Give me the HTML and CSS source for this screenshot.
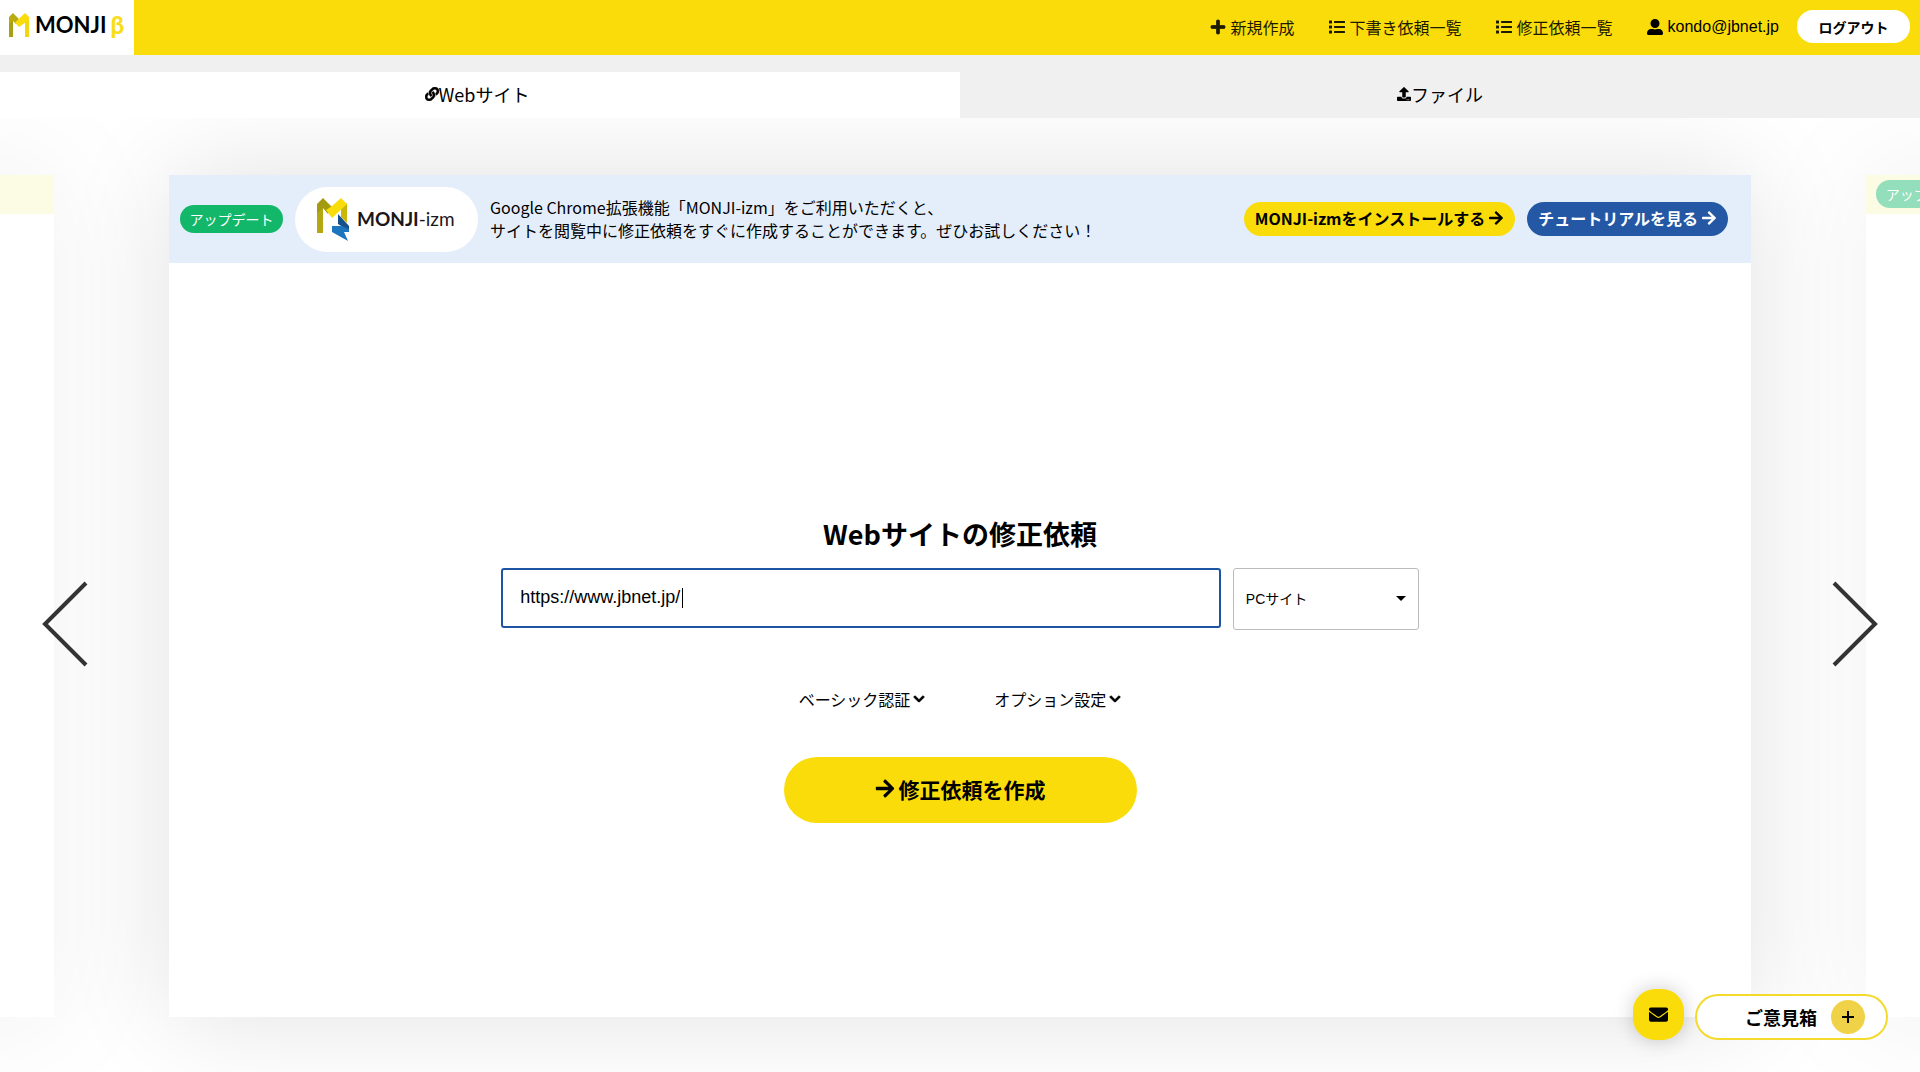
FILE: index.html
```html
<!DOCTYPE html>
<html lang="ja">
<head>
<meta charset="utf-8">
<meta name="viewport" content="width=device-width, initial-scale=1">
<title>MONJI</title>
<link rel="stylesheet" href="styles.css">
</head>
<body>
<svg class="sprite" aria-hidden="true">
  <symbol id="plus" viewBox="0 0 448 512"><path d="M416 208H272V64c0-17.67-14.33-32-32-32h-32c-17.67 0-32 14.33-32 32v144H32c-17.67 0-32 14.33-32 32v32c0 17.67 14.33 32 32 32h144v144c0 17.67 14.33 32 32 32h32c17.67 0 32-14.33 32-32V304h144c17.67 0 32-14.33 32-32v-32c0-17.67-14.33-32-32-32z" stroke="currentColor" stroke-width="24"/></symbol>
  <symbol id="list" viewBox="0 0 512 512"><path d="M80 368H16a16 16 0 0 0-16 16v64a16 16 0 0 0 16 16h64a16 16 0 0 0 16-16v-64a16 16 0 0 0-16-16zm0-320H16A16 16 0 0 0 0 64v64a16 16 0 0 0 16 16h64a16 16 0 0 0 16-16V64a16 16 0 0 0-16-16zm0 160H16a16 16 0 0 0-16 16v64a16 16 0 0 0 16 16h64a16 16 0 0 0 16-16v-64a16 16 0 0 0-16-16zm416 176H176a16 16 0 0 0-16 16v32a16 16 0 0 0 16 16h320a16 16 0 0 0 16-16v-32a16 16 0 0 0-16-16zm0-320H176a16 16 0 0 0-16 16v32a16 16 0 0 0 16 16h320a16 16 0 0 0 16-16V80a16 16 0 0 0-16-16zm0 160H176a16 16 0 0 0-16 16v32a16 16 0 0 0 16 16h320a16 16 0 0 0 16-16v-32a16 16 0 0 0-16-16z"/></symbol>
  <symbol id="user" viewBox="0 0 512 512"><path d="M256 288c79.5 0 144-64.5 144-144S335.5 0 256 0 112 64.5 112 144s64.5 144 144 144zm128 32h-55.1c-22.2 10.2-46.9 16-72.9 16s-50.6-5.8-72.9-16H128C57.3 320 0 377.3 0 448v16c0 26.5 21.5 48 48 48h416c26.5 0 48-21.5 48-48v-16c0-70.7-57.3-128-128-128z"/></symbol>
  <symbol id="link" viewBox="0 0 512 512"><path stroke="currentColor" stroke-width="20" d="M326.612 185.391c59.747 59.809 58.927 155.698.36 214.59-.11.12-.24.25-.36.37l-67.2 67.2c-59.27 59.27-155.699 59.262-214.96 0-59.27-59.26-59.27-155.7 0-214.96l37.106-37.106c9.84-9.84 26.786-3.3 27.294 10.606.648 17.722 3.826 35.527 9.69 52.721 1.986 5.822.567 12.262-3.783 16.612l-13.087 13.087c-28.026 28.026-28.905 73.66-1.155 101.96 28.024 28.579 74.086 28.749 102.325.51l67.2-67.19c28.191-28.191 28.073-73.757 0-101.83-3.701-3.694-7.429-6.564-10.341-8.569a16.037 16.037 0 0 1-6.947-12.606c-.396-10.567 3.348-21.456 11.698-29.806l21.054-21.055c5.521-5.521 14.182-6.199 20.584-1.731a152.482 152.482 0 0 1 20.522 17.197zM467.547 44.449c-59.261-59.262-155.69-59.27-214.96 0l-67.2 67.2c-.12.12-.25.25-.36.37-58.566 58.892-59.387 154.781.36 214.59a152.454 152.454 0 0 0 20.521 17.196c6.402 4.468 15.064 3.789 20.584-1.731l21.054-21.055c8.35-8.35 12.094-19.239 11.698-29.806a16.037 16.037 0 0 0-6.947-12.606c-2.912-2.005-6.64-4.875-10.341-8.569-28.073-28.073-28.191-73.639 0-101.83l67.2-67.19c28.239-28.239 74.3-28.069 102.325.51 27.75 28.3 26.872 73.934-1.155 101.96l-13.087 13.087c-4.35 4.35-5.769 10.79-3.783 16.612 5.864 17.194 9.042 34.999 9.69 52.721.509 13.906 17.454 20.446 27.294 10.606l37.106-37.106c59.271-59.259 59.271-155.699.001-214.959z"/></symbol>
  <symbol id="upload" viewBox="0 0 512 512"><path d="M296 384h-80c-13.3 0-24-10.7-24-24V192h-87.7c-17.8 0-26.7-21.5-14.1-34.1L242.3 5.7c7.5-7.5 19.8-7.5 27.3 0l152.2 152.2c12.6 12.6 3.7 34.1-14.1 34.1H320v168c0 13.3-10.7 24-24 24zm216-8v112c0 13.3-10.7 24-24 24H24c-13.3 0-24-10.7-24-24V376c0-13.3 10.7-24 24-24h136v8c0 30.9 25.1 56 56 56h80c30.9 0 56-25.1 56-56v-8h136c13.3 0 24 10.7 24 24zm-124 88c0-11-9-20-20-20s-20 9-20 20 9 20 20 20 20-9 20-20zm64 0c0-11-9-20-20-20s-20 9-20 20 9 20 20 20 20-9 20-20z"/></symbol>
  <symbol id="arrow" viewBox="0 0 448 512"><path d="M190.5 66.9l22.2-22.2c9.4-9.4 24.6-9.4 33.9 0L441 239c9.4 9.4 9.4 24.6 0 33.9L246.6 467.3c-9.4 9.4-24.6 9.4-33.9 0l-22.2-22.2c-9.5-9.5-9.3-25 .4-34.3L311.4 296H24c-13.3 0-24-10.7-24-24v-32c0-13.3 10.7-24 24-24h287.4L190.9 101.2c-9.8-9.3-10-24.8-.4-34.3z"/></symbol>
  <symbol id="chevron" viewBox="0 0 448 512"><path stroke="currentColor" stroke-width="40" d="M207.029 381.476L12.686 187.132c-9.373-9.373-9.373-24.569 0-33.941l22.667-22.667c9.357-9.357 24.522-9.375 33.901-.04L224 284.505l154.745-154.021c9.379-9.335 24.544-9.317 33.901.04l22.667 22.667c9.373 9.373 9.373 24.569 0 33.941L240.971 381.476c-9.373 9.372-24.569 9.372-33.942 0z"/></symbol>
  <symbol id="mail" viewBox="0 0 512 512"><path d="M502.3 190.8c3.9-3.1 9.7-.2 9.7 4.7V400c0 26.5-21.5 48-48 48H48c-26.5 0-48-21.5-48-48V195.6c0-5 5.7-7.8 9.7-4.7 22.4 17.4 52.1 39.5 154.1 113.6 21.1 15.4 56.7 47.8 92.2 47.6 35.7.3 72-32.8 92.3-47.6 102-74.1 131.6-96.3 154-113.7zM256 320c23.2.4 56.6-29.2 73.4-41.4 132.7-96.3 142.8-104.7 173.4-128.7 5.8-4.5 9.2-11.5 9.2-18.9v-19c0-26.5-21.5-48-48-48H48c-26.5 0-48 21.5-48 48v19c0 7.4 3.4 14.3 9.2 18.9 30.6 23.9 40.7 32.4 173.4 128.7 16.8 12.2 50.2 41.8 73.4 41.4z"/></symbol>
</svg>

<header class="header">
  <a class="logo" href="#">
    <svg class="logo-mark" viewBox="0 0 20 24" aria-hidden="true">
      <path fill="#a79f14" d="M0 4h4v20H0z"/>
      <path fill="#f0d80e" d="M16 4h4v20h-4z"/>
      <path fill="#b9ab10" d="M0 4l4-4 6 6-3 5-3-3-4 3z"/>
      <path fill="#f9dc0a" d="M16 0l4 4v3L10 14 6 9.500z"/>
    </svg>
    <span class="logo-word">MONJI</span><span class="logo-beta">β</span>
  </a>
  <nav class="nav">
    <a class="nav-link" href="#"><svg class="icon"><use href="#plus"/></svg>新規作成</a>
    <a class="nav-link" href="#"><svg class="icon"><use href="#list"/></svg>下書き依頼一覧</a>
    <a class="nav-link" href="#"><svg class="icon"><use href="#list"/></svg>修正依頼一覧</a>
    <a class="nav-link account" href="#"><svg class="icon"><use href="#user"/></svg>kondo@jbnet.jp</a>
  </nav>
  <button class="logout" type="button">ログアウト</button>
</header>

<nav class="tabs">
  <a class="tab tab-active" href="#"><svg class="icon icon-tab"><use href="#link"/></svg>Webサイト</a>
  <a class="tab" href="#"><svg class="icon icon-tab"><use href="#upload"/></svg>ファイル</a>
</nav>

<main class="carousel">
  <section class="slide slide-side" aria-hidden="true">
    <div class="notice"></div>
  </section>

  <section class="slide">
    <div class="banner">
      <span class="badge">アップデート</span>
      <div class="izm">
        <svg class="izm-mark" viewBox="0 0 32 43" aria-hidden="true">
          <path fill="#b3a80f" d="M0 6h6v29H0z"/>
          <path fill="#c9b70c" d="M24 9l6-4v20l-6-6z"/>
          <path fill="#a39a10" d="M0 6l6-6 9 9-4 7-5-6-6 5z"/>
          <path fill="#fadc0a" d="M24 0l6 6-15 14-6-8 6-4z"/>
          <path fill="#14508c" d="M21 16l11 12v5l-11-7z"/>
          <path fill="#1d75bd" d="M15 28h9l8 3v3h-5l4 9-16-9z"/>
        </svg>
        <span class="izm-word">MONJI<span class="izm-tail">-izm</span></span>
      </div>
      <p class="banner-text">Google Chrome拡張機能「MONJI-izm」をご利用いただくと、<br>サイトを閲覧中に修正依頼をすぐに作成することができます。ぜひお試しください！</p>
      <div class="banner-actions">
        <a class="pill pill-yellow" href="#">MONJI-izmをインストールする<svg class="icon icon-narrow"><use href="#arrow"/></svg></a>
        <a class="pill pill-blue" href="#">チュートリアルを見る<svg class="icon icon-narrow"><use href="#arrow"/></svg></a>
      </div>
    </div>

    <form class="form">
      <h1 class="form-title">Webサイトの修正依頼</h1>
      <div class="fields">
        <div class="url">
          <input class="url-input" type="text" value="https://www.jbnet.jp/" aria-label="URL">
          <span class="caret"></span>
        </div>
        <select class="device" aria-label="デバイス">
          <option>PCサイト</option>
        </select>
      </div>
      <div class="toggles">
        <button class="toggle" type="button">ベーシック認証<svg class="icon icon-chevron"><use href="#chevron"/></svg></button>
        <button class="toggle" type="button">オプション設定<svg class="icon icon-chevron"><use href="#chevron"/></svg></button>
      </div>
      <button class="submit" type="button"><svg class="icon icon-submit"><use href="#arrow"/></svg>修正依頼を作成</button>
    </form>
  </section>

  <section class="slide slide-side" aria-hidden="true">
    <div class="notice"><span class="badge">アップデート</span></div>
  </section>

  <button class="arrow arrow-prev" type="button" aria-label="前へ"><svg class="arrow-icon" viewBox="0 0 46 88"><path d="M44 3 3 44l41 41"/></svg></button>
  <button class="arrow arrow-next" type="button" aria-label="次へ"><svg class="arrow-icon" viewBox="0 0 46 88"><path d="M2 3l41 41L2 85"/></svg></button>
</main>

<div class="floating">
  <button class="mail" type="button" aria-label="お問い合わせ"><svg class="icon icon-mail"><use href="#mail"/></svg></button>
  <button class="opinion" type="button">ご意見箱<span class="opinion-plus"><svg class="opinion-icon" viewBox="0 0 12 12"><path d="M6 0v12M0 6h12"/></svg></span></button>
</div>
</body>
</html>
```
FILE: styles.css
```css
* {
  box-sizing: border-box;
}

body {
  margin: 0;
  min-height: 100vh;
  display: flex;
  flex-direction: column;
  overflow: hidden;
  background: #fff;
  color: #000;
  font-family: "Noto Sans CJK JP", sans-serif;
  font-size: 16px;
  line-height: 24px;
}

a {
  color: inherit;
  text-decoration: none;
}

button {
  border: 0;
  padding: 0;
  background: none;
  color: inherit;
  font-family: inherit;
  cursor: pointer;
}

.sprite {
  display: none;
}

.icon {
  width: 16px;
  height: 16px;
  flex: none;
  fill: currentColor;
}

.icon-narrow {
  width: 14px;
}

/* Header */

.header {
  display: flex;
  align-items: center;
  height: 55px;
  padding: 0 10px 2px 0;
  background: #fadc0a;
}

.logo {
  display: flex;
  align-items: center;
  width: 134px;
  height: 55px;
  margin-bottom: -2px;
  padding: 0 0 6px 9px;
  background: #fff;
  font-family: Lato, sans-serif;
  font-weight: 700;
}

.logo-mark {
  width: 20px;
  height: 24px;
}

.logo-word {
  margin-left: 6px;
  font-size: 22px;
}

.logo-beta {
  margin-left: 4px;
  color: #f9dc1c;
  font-size: 24px;
  font-weight: 900;
}

.nav {
  display: flex;
  gap: 34px;
  margin-left: auto;
  color: #1c1a00;
}

.nav-link {
  display: flex;
  align-items: center;
  gap: 5px;
}

.account {
  color: #000;
  font-family: "Liberation Sans", sans-serif;
}

.logout {
  width: 113px;
  height: 33px;
  margin-left: 18px;
  border-radius: 16px;
  background: #fff;
  font-size: 14px;
  font-weight: 700;
  line-height: 20px;
}

/* Tabs */

.tabs {
  display: flex;
  padding-top: 17px;
  background: #f0f0f0;
}

.tab {
  display: flex;
  width: 50%;
  align-items: center;
  justify-content: center;
  height: 46px;
  padding-bottom: 2px;
  font-size: 18px;
}

.tab-active {
  padding-right: 6px;
  background: #fff;
}

.icon-tab {
  width: 14px;
  height: 14px;
}

/* Carousel */

.carousel {
  position: relative;
  display: flex;
  flex: 1;
  justify-content: center;
  gap: 6%;
  padding: 57px 0 55px;
  overflow: hidden;
}

.slide {
  display: flex;
  flex: none;
  flex-direction: column;
  width: 82.4%;
  background: #fff;
  box-shadow: 0 0 100px rgba(0, 0, 0, 0.12);
}

.slide-side {
  opacity: 0.45;
}

.notice {
  height: 39px;
  padding: 5px 10px;
  background: #faf9c6;
}

.banner {
  display: flex;
  align-items: center;
  gap: 12px;
  min-height: 88px;
  padding: 11px 23px 11px 11px;
  background: #e4eefb;
}

.badge {
  display: inline-block;
  width: 103px;
  border-radius: 14px;
  background: #12b76a;
  color: #fff;
  font-size: 14px;
  line-height: 28px;
  text-align: center;
  white-space: nowrap;
}

.izm {
  display: flex;
  align-items: center;
  width: 183px;
  height: 65px;
  padding-left: 22px;
  border-radius: 33px;
  background: #fff;
}

.izm-mark {
  width: 32px;
  height: 43px;
}

.izm-word {
  margin-left: 8px;
  color: #1c1718;
  font-family: Lato, sans-serif;
  font-size: 19px;
  font-weight: 700;
}

.izm-tail {
  font-weight: 400;
}

.banner-text {
  margin: 0;
  line-height: 23px;
}

.banner-actions {
  display: flex;
  gap: 12px;
  margin-left: auto;
}

.pill {
  display: flex;
  align-items: center;
  gap: 4px;
  height: 34px;
  padding: 0 12px 2px 11px;
  border-radius: 17px;
  font-weight: 700;
}

.pill-yellow {
  background: #fadc0a;
}

.pill-blue {
  background: #2458a4;
  color: #fff;
}

/* Form */

.form {
  display: flex;
  flex: 1;
  flex-direction: column;
  align-items: center;
  justify-content: center;
  padding-top: 56px;
}

.form-title {
  margin: 0 0 14px;
  font-size: 27px;
  font-weight: 700;
  line-height: 40px;
}

.fields {
  display: flex;
  gap: 12px;
  width: 58%;
}

.url {
  position: relative;
  flex: 1;
  height: 60px;
}

.url-input {
  width: 100%;
  height: 100%;
  border: 2px solid #1d55a2;
  border-radius: 3px;
  padding: 0 17px;
  outline: 0;
  font-family: "Liberation Sans", sans-serif;
  font-size: 18px;
}

.caret {
  position: absolute;
  top: 20px;
  left: 181px;
  width: 1px;
  height: 20px;
  background: #000;
}

.device {
  width: 186px;
  height: 62px;
  border: 1px solid #bbb;
  border-radius: 3px;
  padding: 0 12px;
  appearance: none;
  background: #fff url("data:image/svg+xml,%3Csvg xmlns='http://www.w3.org/2000/svg' viewBox='0 0 10 5'%3E%3Cpath d='M0 0h10L5 5z'/%3E%3C/svg%3E") no-repeat right 12px center / 10px 5px;
  color: #000;
  font-family: "Liberation Sans", "Noto Sans CJK JP", sans-serif;
  font-size: 14px;
}

.toggles {
  display: flex;
  gap: 69px;
  margin: 57px 0 46px;
}

.toggle {
  display: flex;
  align-items: center;
  gap: 3px;
  font-size: 16px;
  line-height: 24px;
}

.icon-chevron {
  width: 12px;
  height: 12px;
}

.submit {
  display: flex;
  align-items: center;
  justify-content: center;
  gap: 4px;
  width: 353px;
  height: 66px;
  padding-bottom: 2px;
  border-radius: 33px;
  background: #fadc0a;
  font-size: 21px;
  font-weight: 700;
}

.icon-submit {
  width: 20px;
  height: 21px;
}

.arrow {
  position: absolute;
  top: calc(50% + 29px);
  width: 46px;
  height: 88px;
  transform: translateY(-50%);
}

.arrow-prev {
  left: 42px;
}

.arrow-next {
  right: 42px;
}

.arrow-icon {
  display: block;
  width: 46px;
  height: 88px;
  fill: none;
  stroke: #333;
  stroke-width: 4;
}

/* Floating buttons */

.floating {
  position: fixed;
  right: 32px;
  bottom: 32px;
  display: flex;
  align-items: flex-end;
  gap: 11px;
}

.mail {
  display: flex;
  align-items: center;
  justify-content: center;
  width: 51px;
  height: 51px;
  border-radius: 22px;
  background: #fadc0a;
  box-shadow: 0 0 20px rgba(0, 0, 0, 0.2);
}

.icon-mail {
  width: 19px;
  height: 19px;
}

.opinion {
  display: flex;
  align-items: center;
  justify-content: flex-end;
  gap: 14px;
  width: 193px;
  height: 46px;
  padding-right: 21px;
  border: 2px solid #f4da2c;
  border-radius: 23px;
  background: #fff;
  font-size: 18px;
  font-weight: 700;
}

.opinion-plus {
  display: flex;
  align-items: center;
  justify-content: center;
  width: 34px;
  height: 34px;
  border-radius: 17px;
  background: #f0d248;
}

.opinion-icon {
  width: 12px;
  height: 12px;
  stroke: #000;
  stroke-width: 2;
}
```
